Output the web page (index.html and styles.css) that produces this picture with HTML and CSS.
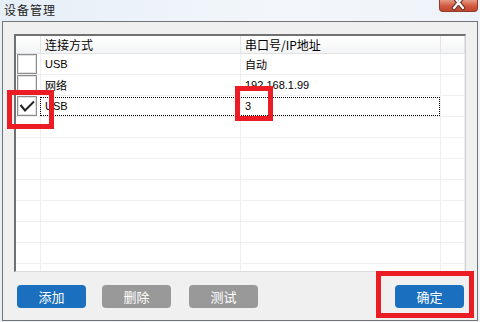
FILE: index.html
```html
<!DOCTYPE html>
<html>
<head>
<meta charset="utf-8">
<link rel="stylesheet" href="styles.css">
</head>
<body>
<div class="titlebar">
  <span class="title">设备管理</span>
  <div class="close">
    <svg width="39" height="12" viewBox="0 0 39 12">
      <path d="M15 -3 L24 8 M24 -3 L15 8" stroke="#6b3a30" stroke-width="4.5" stroke-linecap="round" fill="none"/>
      <path d="M15 -3 L24 8 M24 -3 L15 8" stroke="#ffffff" stroke-width="2.2" stroke-linecap="round" fill="none"/>
    </svg>
  </div>
</div>
<div class="frame">
  <div class="list">
    <div class="row head">
      <div class="c c1"></div>
      <div class="c c2">连接方式</div>
      <div class="c c3">串口号/IP地址</div>
      <div class="c c4"></div>
    </div>
    <div class="rows">
      <div class="row">
        <div class="c c1"><span class="cb"></span></div>
        <div class="c c2">USB</div>
        <div class="c c3">自动</div>
        <div class="c c4"></div>
      </div>
      <div class="row">
        <div class="c c1"><span class="cb"></span></div>
        <div class="c c2">网络</div>
        <div class="c c3">192.168.1.99</div>
        <div class="c c4"></div>
      </div>
      <div class="row focus">
        <div class="c c1"><span class="cb"><svg width="18" height="17" viewBox="0 0 18 17"><path d="M2.5 7 L7 12.5 L16 3.5" stroke="#222" stroke-width="2" fill="none"/></svg></span></div>
        <div class="c c2">USB</div>
        <div class="c c3">3</div>
        <div class="c c4"></div>
      </div>
      <div class="row"><div class="c c1"></div><div class="c c2"></div><div class="c c3"></div><div class="c c4"></div></div>
      <div class="row"><div class="c c1"></div><div class="c c2"></div><div class="c c3"></div><div class="c c4"></div></div>
      <div class="row"><div class="c c1"></div><div class="c c2"></div><div class="c c3"></div><div class="c c4"></div></div>
      <div class="row"><div class="c c1"></div><div class="c c2"></div><div class="c c3"></div><div class="c c4"></div></div>
      <div class="row"><div class="c c1"></div><div class="c c2"></div><div class="c c3"></div><div class="c c4"></div></div>
      <div class="row"><div class="c c1"></div><div class="c c2"></div><div class="c c3"></div><div class="c c4"></div></div>
      <div class="row"><div class="c c1"></div><div class="c c2"></div><div class="c c3"></div><div class="c c4"></div></div>
      <div class="row"><div class="c c1"></div><div class="c c2"></div><div class="c c3"></div><div class="c c4"></div></div>
    </div>
  </div>
  <div class="footer">
    <div class="btn blue">添加</div>
    <div class="btn gray del">删除</div>
    <div class="btn gray test">测试</div>
    <div class="btn blue ok">确定</div>
  </div>
</div>
<div class="mark m1"></div>
<div class="mark m2"></div>
<div class="mark m3"></div>
</body>
</html>
```
FILE: styles.css
```css
html, body {
  margin: 0;
  padding: 0;
}
body {
  width: 480px;
  height: 322px;
  overflow: hidden;
  position: relative;
  background: linear-gradient(to right, #e6eef7 0%, #f3f7fb 60%, #eef3f9 100%);
  font-family: "Liberation Sans", "Noto Sans CJK SC", sans-serif;
}
.titlebar {
  height: 21px;
  display: flex;
  justify-content: space-between;
  align-items: flex-start;
}
.title {
  margin-left: 4px;
  margin-top: 2px;
  font-family: "Noto Sans CJK SC", sans-serif;
  font-size: 12px;
  line-height: 16px;
  letter-spacing: 1px;
  color: #1e1e1e;
}
.close {
  width: 39px;
  height: 12px;
  margin-right: 2px;
  box-sizing: border-box;
  border: 1px solid #8e3b2c;
  border-top: none;
  border-radius: 0 0 4px 4px;
  background: linear-gradient(#e49a86, #d3583f 55%, #c2442c);
  overflow: hidden;
}
.close svg {
  display: block;
  margin-left: -1px;
}
.frame {
  margin-left: 2px;
  width: 476px;
  height: 300px;
  box-sizing: border-box;
  border: 1px solid #737373;
  background: #f0f0f0;
  display: flex;
  flex-direction: column;
}
.list {
  margin: 12px 0 0 11px;
  width: 452px;
  height: 238px;
  box-sizing: border-box;
  border-left: 2px solid #707070;
  border-top: 2px solid #707070;
  border-right: 1px solid #cfcfcf;
  border-bottom: 1px solid #dcdcdc;
  background: #ffffff;
  overflow: hidden;
}
.row {
  display: grid;
  grid-template-columns: 25px 200px 200px 24px;
  height: 21px;
  box-sizing: border-box;
  border-bottom: 1px solid #efefef;
  position: relative;
  font-size: 11px;
  color: #000;
}
.row.head {
  height: 18px;
  border-bottom: 1px solid #e2e2e2;
  background: linear-gradient(#ffffff, #f3f4f5);
  font-size: 12px;
  font-family: "Noto Sans CJK SC", sans-serif;
}
.c {
  box-sizing: border-box;
  border-right: 1px solid #efefef;
  padding-left: 4px;
  display: flex;
  align-items: center;
  white-space: nowrap;
}
.head .c {
  border-right: 1px solid #e4e4e4;
  line-height: 16px;
}
.c1 {
  padding-left: 1px;
}
.cb {
  width: 20px;
  height: 20px;
  box-sizing: border-box;
  border: 1px solid #8d8d8d;
  box-shadow: inset 0 0 0 1px #e2e2e2;
  background: #fff;
  display: flex;
  align-items: center;
  justify-content: center;
}
.cb svg {
  display: block;
}
.focus::after {
  content: "";
  position: absolute;
  left: 24px;
  top: 1px;
  width: 400px;
  height: 19px;
  box-sizing: border-box;
  border: 1px dotted #000;
  pointer-events: none;
}
.footer {
  display: flex;
  align-items: center;
  margin-top: 13px;
  padding: 0 13px 0 14px;
}
.btn {
  width: 69px;
  height: 23px;
  border-radius: 4px;
  color: #fff;
  font-family: "Noto Sans CJK SC", sans-serif;
  font-size: 13px;
  display: flex;
  align-items: center;
  justify-content: center;
}
.blue {
  background: #1a6fbe;
}
.gray {
  background: #999999;
}
.del {
  margin-left: 16px;
}
.test {
  margin-left: 18px;
}
.ok {
  margin-left: auto;
}
.mark {
  position: absolute;
  box-sizing: border-box;
  border: 5px solid #ec1c24;
}
.m1 {
  left: 7px;
  top: 90px;
  width: 47px;
  height: 39px;
}
.m2 {
  left: 235px;
  top: 86px;
  width: 38px;
  height: 35px;
}
.m3 {
  left: 376px;
  top: 271px;
  width: 98px;
  height: 47px;
}
```
